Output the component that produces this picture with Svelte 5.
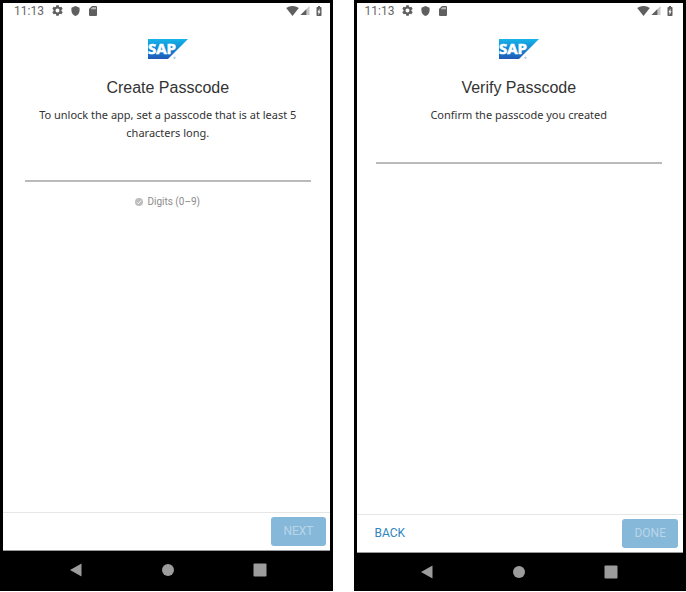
<script>
  const screens = [
    {
      id: 'create',
      title: 'Create Passcode',
      message: 'To unlock the app, set a passcode that is at least 5 characters long.',
      hint: 'Digits (0–9)',
      back: null,
      action: 'NEXT'
    },
    {
      id: 'verify',
      title: 'Verify Passcode',
      message: 'Confirm the passcode you created',
      hint: null,
      back: 'BACK',
      action: 'DONE'
    }
  ];
</script>

<main class="screens">
  {#each screens as screen (screen.id)}
    <section class="phone {screen.id}" aria-labelledby="{screen.id}-title">
      <div class="display">
        <div class="status">
          <span class="clock">11:13</span>
          <svg class="gear" viewBox="2 2 20 20" aria-hidden="true">
            <path d="M19.14 12.94c.04-.3.06-.61.06-.94s-.02-.64-.07-.94l2.03-1.58a.49.49 0 0 0 .12-.61l-1.92-3.32a.49.49 0 0 0-.59-.22l-2.39.96a7 7 0 0 0-1.62-.94l-.36-2.54A.48.48 0 0 0 13.92 2.4h-3.84a.48.48 0 0 0-.48.41l-.36 2.54c-.59.24-1.13.57-1.62.94l-2.39-.96a.48.48 0 0 0-.59.22L2.72 8.87a.48.48 0 0 0 .12.61l2.03 1.58c-.05.3-.07.63-.07.94s.02.64.07.94l-2.03 1.58a.49.49 0 0 0-.12.61l1.92 3.32c.12.22.37.29.59.22l2.39-.96c.5.38 1.03.7 1.62.94l.36 2.54c.05.24.24.41.48.41h3.84c.24 0 .44-.17.48-.41l.36-2.54a7 7 0 0 0 1.62-.94l2.39.96c.22.08.47 0 .59-.22l1.92-3.32a.48.48 0 0 0-.12-.61zM12 15.6a3.6 3.6 0 1 1 0-7.2 3.6 3.6 0 0 1 0 7.2z" />
          </svg>
          <svg class="shield" viewBox="3 1 18 22" aria-hidden="true">
            <path d="M12 1 3 5v6c0 5.55 3.84 10.74 9 12 5.16-1.26 9-6.45 9-12V5z" />
          </svg>
          <svg class="card" viewBox="4 2 16 20" aria-hidden="true">
            <path d="M18 2h-8L4 8v12a2 2 0 0 0 2 2h12a2 2 0 0 0 2-2V4a2 2 0 0 0-2-2z" />
            <path fill="#bbb" d="M8 8.500V7.500L11 4.500h7v4z" />
          </svg>
          <svg class="wifi" viewBox="0 0 24 19" aria-hidden="true">
            <path d="M12 19 24 4C20.500 1.300 16.500 0 12 0S3.500 1.300 0 4z" />
          </svg>
          <svg class="signal" viewBox="0 0 20 20" aria-hidden="true">
            <path opacity=".35" d="M0 20h20V0z" />
            <path d="M0 20h13V7z" />
          </svg>
          <svg class="battery" viewBox="7 2 10 20" aria-hidden="true">
            <path fill-rule="evenodd" d="M15.670 4H14V2h-4v2H8.330C7.600 4 7 4.600 7 5.330v15.330C7 21.400 7.600 22 8.330 22h7.330c.740 0 1.340-.600 1.340-1.330V5.330C17 4.600 16.400 4 15.670 4zM11 20v-5.500H9L13 7v5.500h2z" />
          </svg>
        </div>

        <div class="content">
          <svg class="logo" viewBox="0 0 40 20" role="img" aria-label="SAP">
            <defs>
              <linearGradient id="{screen.id}-blue" x1="0" y1="0" x2="0" y2="1">
                <stop offset="0" stop-color="#16b4ea" />
                <stop offset=".5" stop-color="#1488d4" />
                <stop offset="1" stop-color="#2058b8" />
              </linearGradient>
            </defs>
            <path fill="url(#{screen.id}-blue)" d="M0 0h40L20 20H0z" />
            <text x="0" y="15" font-family="Open Sans, Noto Sans, sans-serif" font-size="15" font-weight="700" fill="#fff" stroke="#fff" stroke-width=".6">SAP</text>
            <circle cx="26.500" cy="18.800" r=".8" fill="none" stroke="#5a93cc" stroke-width=".5" />
          </svg>
          <h1 id="{screen.id}-title">{screen.title}</h1>
          <label for="{screen.id}-code">{screen.message}</label>
          <input id="{screen.id}-code" type="password" inputmode="numeric" autocomplete="off" />
          {#if screen.hint}
            <p class="hint">
              <svg viewBox="0 0 18 18" aria-hidden="true">
                <circle cx="9" cy="9" r="9" fill="#bdbdbd" />
                <path d="m4.500 9.500 3 3 6.500-7" fill="none" stroke="#fff" stroke-width="2" />
              </svg>
              {screen.hint}
            </p>
          {/if}
        </div>

        <footer>
          {#if screen.back}
            <button class="back" type="button">{screen.back}</button>
          {/if}
          <button class="action" type="button" disabled>{screen.action}</button>
        </footer>
      </div>

      <nav aria-label="System navigation">
        <button type="button" aria-label="Back">
          <svg viewBox="0 0 14 14"><path d="M1 7 12.500 .5v13z" /></svg>
        </button>
        <button type="button" aria-label="Home">
          <svg viewBox="0 0 14 14"><circle cx="7" cy="7" r="6" /></svg>
        </button>
        <button type="button" aria-label="Recent apps">
          <svg viewBox="0 0 14 14"><rect x=".5" y=".5" width="13" height="13" rx="1" /></svg>
        </button>
      </nav>
    </section>
  {/each}
</main>

<style>
  :global(body) {
    margin: 0;
    background: #fff;
  }

  .screens {
    box-sizing: border-box;
    display: flex;
    gap: 21px;
    min-height: 100vh;
    padding-bottom: 1px;
    font-family: Roboto, 'Liberation Sans', sans-serif;
  }

  .phone {
    flex: 1;
    min-width: 0;
    display: flex;
    flex-direction: column;
    background: #000;
  }

  .display {
    flex: 1;
    display: flex;
    flex-direction: column;
    margin: 3px 3px 0;
    background: #fff;
  }

  .status {
    display: flex;
    align-items: center;
    height: 15px;
    padding: 0 8px 0 11px;
    color: #666;
    fill: #5f5f5f;
  }

  .verify .status {
    padding: 0 10px 0 8px;
  }

  .clock {
    font-size: 12px;
    line-height: 16px;
    margin-right: 8px;
  }

  .gear {
    width: 11px;
    height: 11px;
  }

  .shield {
    width: 9px;
    height: 10px;
    margin-left: 8px;
  }

  .card {
    width: 8px;
    height: 10px;
    margin-left: 9px;
  }

  .wifi {
    width: 13px;
    height: 10px;
    margin-left: auto;
  }

  .signal {
    width: 10px;
    height: 9px;
    margin-left: 1px;
  }

  .battery {
    width: 6px;
    height: 10px;
    margin-left: 6px;
  }

  .content {
    flex: 1;
    display: flex;
    flex-direction: column;
    align-items: center;
    padding: 21px 19px 0 22px;
    color: #333;
  }

  .verify .content {
    padding: 21px 21px 0 19px;
  }

  .logo {
    width: 40px;
    height: 20px;
  }

  h1 {
    margin: 18px 0 7px;
    font-family: 'Liberation Sans', Arial, sans-serif;
    font-size: 16px;
    font-weight: 400;
    line-height: 22px;
  }

  label {
    max-width: 260px;
    font-family: 'Noto Sans', 'Open Sans', sans-serif;
    font-size: 11px;
    line-height: 18px;
    text-align: center;
  }

  input {
    box-sizing: border-box;
    align-self: stretch;
    height: 40px;
    padding: 0 4px;
    border: 0;
    border-bottom: 2px solid #bababa;
    border-radius: 0;
    outline: 0;
    background: transparent;
    font: 16px Roboto, sans-serif;
  }

  .hint {
    display: flex;
    align-items: center;
    gap: 4px;
    margin: 12px 0 0;
    color: #8c8c8c;
    font-size: 10px;
    line-height: 16px;
  }

  .hint svg {
    width: 8px;
    height: 8px;
  }

  footer {
    box-sizing: border-box;
    display: flex;
    align-items: center;
    height: 39px;
    padding: 0 4px 1px 17px;
    border-top: 1px solid #e6e6e6;
    border-bottom: 1px solid #999;
  }

  .verify footer {
    padding: 0 5px 1px 18px;
  }

  footer button {
    height: 29px;
    border: 0;
    font: 12px Roboto, 'Liberation Sans', sans-serif;
  }

  .back {
    padding: 0;
    background: none;
    color: #2f86c0;
  }

  .action {
    margin-left: auto;
    padding: 0 12px;
    border-radius: 3px;
    background: #85b8d9;
    color: #b9d6e9;
  }

  nav {
    display: flex;
    justify-content: center;
    gap: 78px;
    height: 40px;
    padding-left: 3px;
  }

  nav button {
    display: flex;
    align-items: center;
    height: 38px;
    padding: 0;
    border: 0;
    background: none;
    fill: #9c9c9c;
  }

  nav svg {
    width: 14px;
    height: 14px;
  }

  .verify nav {
    height: 38px;
    padding: 0 2px 0 0;
  }
</style>
